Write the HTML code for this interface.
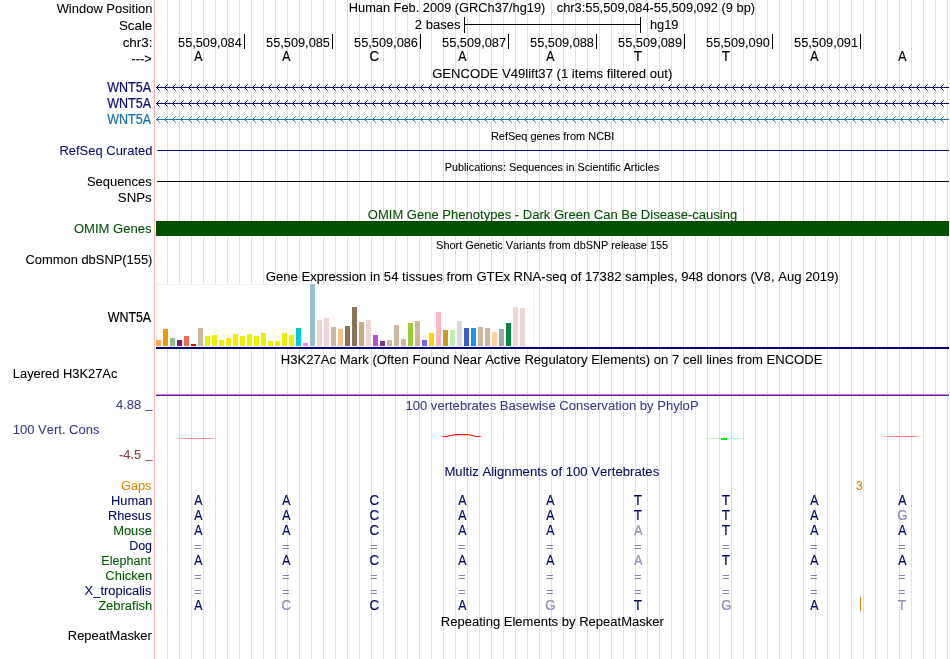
<!DOCTYPE html>
<html lang="en"><head><meta charset="utf-8"><title>UCSC Genome Browser chr3:55,509,084-55,509,092</title>
<style>html,body{margin:0;padding:0;background:#fff;}svg{display:block;will-change:transform;}text{font-family:"Liberation Sans", Arial, Helvetica, sans-serif;font-size:13.7px;font-kerning:none;white-space:pre;color:#000;fill:currentColor;stroke:currentColor;stroke-width:0.08px;}.s{font-size:11.4px;}.u{font-size:13.8px;}.c{font-size:13.8px;stroke-width:0.2px;}.ar{font-size:11.6px;}.m{text-anchor:middle;}.eq{font-size:12px;color:#8282B4;stroke:none;}.nv{color:#0C0C78;}.lb{color:#1870B0;}.gr{color:#005000;}.bl{color:#3C3C8C;}.rd{color:#8C3C3C;}.or{color:#E68400;}.sp1{color:#000A64;}.sp2{color:#005A00;}.mm{color:#8C8CB8;}</style></head><body>
<svg width="950" height="659" viewBox="0 0 950 659">
<rect width="950" height="659" fill="#fff"/>
<path d="M167 0V659M179 0V659M191 0V659M203 0V659M215 0V659M227 0V659M239 0V659M251 0V659M263 0V659M275 0V659M287 0V659M299 0V659M311 0V659M323 0V659M335 0V659M347 0V659M359 0V659M371 0V659M383 0V659M395 0V659M407 0V659M419 0V659M431 0V659M443 0V659M455 0V659M467 0V659M479 0V659M491 0V659M503 0V659M515 0V659M527 0V659M539 0V659M551 0V659M563 0V659M575 0V659M587 0V659M599 0V659M611 0V659M623 0V659M635 0V659M647 0V659M659 0V659M671 0V659M683 0V659M695 0V659M707 0V659M719 0V659M731 0V659M743 0V659M755 0V659M767 0V659M779 0V659M791 0V659M803 0V659M815 0V659M827 0V659M839 0V659M851 0V659M863 0V659M875 0V659M887 0V659M899 0V659M911 0V659M923 0V659M935 0V659M947 0V659" stroke="#DCDCFF" stroke-width="1" fill="none" transform="translate(0.5,0)" shape-rendering="crispEdges"/>
<rect x="154" y="0" width="1" height="659" fill="#FFB4B4"/>
<text x="56.64" y="13" textLength="95.90" lengthAdjust="spacingAndGlyphs">Window Position</text>
<text x="118.89" y="30" textLength="33.40" lengthAdjust="spacingAndGlyphs">Scale</text>
<text x="122.63" y="47" textLength="29.90" lengthAdjust="spacingAndGlyphs">chr3:</text>
<text x="131.54" y="63" textLength="20.08" lengthAdjust="spacingAndGlyphs">---&gt;</text>
<text x="348.75" y="12" textLength="196.55" lengthAdjust="spacingAndGlyphs">Human Feb. 2009 (GRCh37/hg19)</text>
<text x="556.81" y="12" textLength="198.29" lengthAdjust="spacingAndGlyphs">chr3:55,509,084-55,509,092 (9 bp)</text>
<text x="414.84" y="29" textLength="45.63" lengthAdjust="spacingAndGlyphs">2 bases</text>
<text x="649.91" y="29" textLength="28.60" lengthAdjust="spacingAndGlyphs">hg19</text>
<path d="M464.5 17V33M640.5 17V33M464 24.5H641" stroke="#000" stroke-width="1" fill="none" shape-rendering="crispEdges"/>
<text x="178.09" y="47" textLength="63.68" lengthAdjust="spacingAndGlyphs">55,509,084</text>
<rect x="244" y="34" width="1" height="15" fill="#000"/>
<text x="266.09" y="47" textLength="63.85" lengthAdjust="spacingAndGlyphs">55,509,085</text>
<rect x="332" y="34" width="1" height="15" fill="#000"/>
<text x="354.09" y="47" textLength="63.87" lengthAdjust="spacingAndGlyphs">55,509,086</text>
<rect x="420" y="34" width="1" height="15" fill="#000"/>
<text x="442.09" y="47" textLength="63.95" lengthAdjust="spacingAndGlyphs">55,509,087</text>
<rect x="508" y="34" width="1" height="15" fill="#000"/>
<text x="530.09" y="47" textLength="63.87" lengthAdjust="spacingAndGlyphs">55,509,088</text>
<rect x="596" y="34" width="1" height="15" fill="#000"/>
<text x="618.09" y="47" textLength="63.92" lengthAdjust="spacingAndGlyphs">55,509,089</text>
<rect x="684" y="34" width="1" height="15" fill="#000"/>
<text x="706.09" y="47" textLength="63.81" lengthAdjust="spacingAndGlyphs">55,509,090</text>
<rect x="772" y="34" width="1" height="15" fill="#000"/>
<text x="794.09" y="47" textLength="63.94" lengthAdjust="spacingAndGlyphs">55,509,091</text>
<rect x="860" y="34" width="1" height="15" fill="#000"/>
<text x="194.20" y="61" textLength="8.19" lengthAdjust="spacingAndGlyphs" class="c">A</text>
<text x="282.20" y="61" textLength="8.19" lengthAdjust="spacingAndGlyphs" class="c">A</text>
<text x="369.43" y="61" textLength="9.57" lengthAdjust="spacingAndGlyphs" class="c">C</text>
<text x="458.20" y="61" textLength="8.19" lengthAdjust="spacingAndGlyphs" class="c">A</text>
<text x="546.20" y="61" textLength="8.19" lengthAdjust="spacingAndGlyphs" class="c">A</text>
<text x="633.87" y="61" textLength="8.26" lengthAdjust="spacingAndGlyphs" class="c">T</text>
<text x="721.87" y="61" textLength="8.26" lengthAdjust="spacingAndGlyphs" class="c">T</text>
<text x="810.20" y="61" textLength="8.19" lengthAdjust="spacingAndGlyphs" class="c">A</text>
<text x="898.20" y="61" textLength="8.19" lengthAdjust="spacingAndGlyphs" class="c">A</text>
<text x="432.14" y="78" textLength="240.17" lengthAdjust="spacingAndGlyphs">GENCODE V49lift37 (1 items filtered out)</text>
<text x="107.25" y="92" textLength="43.78" lengthAdjust="spacingAndGlyphs" class="nv c">WNT5A</text>
<rect x="156" y="87" width="793" height="1" fill="#0C0C78"/>
<path d="M156.5 87.5l2.8 -2.8M156.5 87.5l2.8 2.8M164.5 87.5l2.8 -2.8M164.5 87.5l2.8 2.8M172.5 87.5l2.8 -2.8M172.5 87.5l2.8 2.8M180.5 87.5l2.8 -2.8M180.5 87.5l2.8 2.8M188.5 87.5l2.8 -2.8M188.5 87.5l2.8 2.8M196.5 87.5l2.8 -2.8M196.5 87.5l2.8 2.8M204.5 87.5l2.8 -2.8M204.5 87.5l2.8 2.8M212.5 87.5l2.8 -2.8M212.5 87.5l2.8 2.8M220.5 87.5l2.8 -2.8M220.5 87.5l2.8 2.8M228.5 87.5l2.8 -2.8M228.5 87.5l2.8 2.8M236.5 87.5l2.8 -2.8M236.5 87.5l2.8 2.8M244.5 87.5l2.8 -2.8M244.5 87.5l2.8 2.8M252.5 87.5l2.8 -2.8M252.5 87.5l2.8 2.8M260.5 87.5l2.8 -2.8M260.5 87.5l2.8 2.8M268.5 87.5l2.8 -2.8M268.5 87.5l2.8 2.8M276.5 87.5l2.8 -2.8M276.5 87.5l2.8 2.8M284.5 87.5l2.8 -2.8M284.5 87.5l2.8 2.8M292.5 87.5l2.8 -2.8M292.5 87.5l2.8 2.8M300.5 87.5l2.8 -2.8M300.5 87.5l2.8 2.8M308.5 87.5l2.8 -2.8M308.5 87.5l2.8 2.8M316.5 87.5l2.8 -2.8M316.5 87.5l2.8 2.8M324.5 87.5l2.8 -2.8M324.5 87.5l2.8 2.8M332.5 87.5l2.8 -2.8M332.5 87.5l2.8 2.8M340.5 87.5l2.8 -2.8M340.5 87.5l2.8 2.8M348.5 87.5l2.8 -2.8M348.5 87.5l2.8 2.8M356.5 87.5l2.8 -2.8M356.5 87.5l2.8 2.8M364.5 87.5l2.8 -2.8M364.5 87.5l2.8 2.8M372.5 87.5l2.8 -2.8M372.5 87.5l2.8 2.8M380.5 87.5l2.8 -2.8M380.5 87.5l2.8 2.8M388.5 87.5l2.8 -2.8M388.5 87.5l2.8 2.8M396.5 87.5l2.8 -2.8M396.5 87.5l2.8 2.8M404.5 87.5l2.8 -2.8M404.5 87.5l2.8 2.8M412.5 87.5l2.8 -2.8M412.5 87.5l2.8 2.8M420.5 87.5l2.8 -2.8M420.5 87.5l2.8 2.8M428.5 87.5l2.8 -2.8M428.5 87.5l2.8 2.8M436.5 87.5l2.8 -2.8M436.5 87.5l2.8 2.8M444.5 87.5l2.8 -2.8M444.5 87.5l2.8 2.8M452.5 87.5l2.8 -2.8M452.5 87.5l2.8 2.8M460.5 87.5l2.8 -2.8M460.5 87.5l2.8 2.8M468.5 87.5l2.8 -2.8M468.5 87.5l2.8 2.8M476.5 87.5l2.8 -2.8M476.5 87.5l2.8 2.8M484.5 87.5l2.8 -2.8M484.5 87.5l2.8 2.8M492.5 87.5l2.8 -2.8M492.5 87.5l2.8 2.8M500.5 87.5l2.8 -2.8M500.5 87.5l2.8 2.8M508.5 87.5l2.8 -2.8M508.5 87.5l2.8 2.8M516.5 87.5l2.8 -2.8M516.5 87.5l2.8 2.8M524.5 87.5l2.8 -2.8M524.5 87.5l2.8 2.8M532.5 87.5l2.8 -2.8M532.5 87.5l2.8 2.8M540.5 87.5l2.8 -2.8M540.5 87.5l2.8 2.8M548.5 87.5l2.8 -2.8M548.5 87.5l2.8 2.8M556.5 87.5l2.8 -2.8M556.5 87.5l2.8 2.8M564.5 87.5l2.8 -2.8M564.5 87.5l2.8 2.8M572.5 87.5l2.8 -2.8M572.5 87.5l2.8 2.8M580.5 87.5l2.8 -2.8M580.5 87.5l2.8 2.8M588.5 87.5l2.8 -2.8M588.5 87.5l2.8 2.8M596.5 87.5l2.8 -2.8M596.5 87.5l2.8 2.8M604.5 87.5l2.8 -2.8M604.5 87.5l2.8 2.8M612.5 87.5l2.8 -2.8M612.5 87.5l2.8 2.8M620.5 87.5l2.8 -2.8M620.5 87.5l2.8 2.8M628.5 87.5l2.8 -2.8M628.5 87.5l2.8 2.8M636.5 87.5l2.8 -2.8M636.5 87.5l2.8 2.8M644.5 87.5l2.8 -2.8M644.5 87.5l2.8 2.8M652.5 87.5l2.8 -2.8M652.5 87.5l2.8 2.8M660.5 87.5l2.8 -2.8M660.5 87.5l2.8 2.8M668.5 87.5l2.8 -2.8M668.5 87.5l2.8 2.8M676.5 87.5l2.8 -2.8M676.5 87.5l2.8 2.8M684.5 87.5l2.8 -2.8M684.5 87.5l2.8 2.8M692.5 87.5l2.8 -2.8M692.5 87.5l2.8 2.8M700.5 87.5l2.8 -2.8M700.5 87.5l2.8 2.8M708.5 87.5l2.8 -2.8M708.5 87.5l2.8 2.8M716.5 87.5l2.8 -2.8M716.5 87.5l2.8 2.8M724.5 87.5l2.8 -2.8M724.5 87.5l2.8 2.8M732.5 87.5l2.8 -2.8M732.5 87.5l2.8 2.8M740.5 87.5l2.8 -2.8M740.5 87.5l2.8 2.8M748.5 87.5l2.8 -2.8M748.5 87.5l2.8 2.8M756.5 87.5l2.8 -2.8M756.5 87.5l2.8 2.8M764.5 87.5l2.8 -2.8M764.5 87.5l2.8 2.8M772.5 87.5l2.8 -2.8M772.5 87.5l2.8 2.8M780.5 87.5l2.8 -2.8M780.5 87.5l2.8 2.8M788.5 87.5l2.8 -2.8M788.5 87.5l2.8 2.8M796.5 87.5l2.8 -2.8M796.5 87.5l2.8 2.8M804.5 87.5l2.8 -2.8M804.5 87.5l2.8 2.8M812.5 87.5l2.8 -2.8M812.5 87.5l2.8 2.8M820.5 87.5l2.8 -2.8M820.5 87.5l2.8 2.8M828.5 87.5l2.8 -2.8M828.5 87.5l2.8 2.8M836.5 87.5l2.8 -2.8M836.5 87.5l2.8 2.8M844.5 87.5l2.8 -2.8M844.5 87.5l2.8 2.8M852.5 87.5l2.8 -2.8M852.5 87.5l2.8 2.8M860.5 87.5l2.8 -2.8M860.5 87.5l2.8 2.8M868.5 87.5l2.8 -2.8M868.5 87.5l2.8 2.8M876.5 87.5l2.8 -2.8M876.5 87.5l2.8 2.8M884.5 87.5l2.8 -2.8M884.5 87.5l2.8 2.8M892.5 87.5l2.8 -2.8M892.5 87.5l2.8 2.8M900.5 87.5l2.8 -2.8M900.5 87.5l2.8 2.8M908.5 87.5l2.8 -2.8M908.5 87.5l2.8 2.8M916.5 87.5l2.8 -2.8M916.5 87.5l2.8 2.8M924.5 87.5l2.8 -2.8M924.5 87.5l2.8 2.8M932.5 87.5l2.8 -2.8M932.5 87.5l2.8 2.8M940.5 87.5l2.8 -2.8M940.5 87.5l2.8 2.8" stroke="#0C0C78" stroke-width="1" fill="none" stroke-linecap="square"/>
<text x="107.25" y="108" textLength="43.78" lengthAdjust="spacingAndGlyphs" class="nv c">WNT5A</text>
<rect x="156" y="103" width="793" height="1" fill="#0C0C78"/>
<path d="M156.5 103.5l2.8 -2.8M156.5 103.5l2.8 2.8M164.5 103.5l2.8 -2.8M164.5 103.5l2.8 2.8M172.5 103.5l2.8 -2.8M172.5 103.5l2.8 2.8M180.5 103.5l2.8 -2.8M180.5 103.5l2.8 2.8M188.5 103.5l2.8 -2.8M188.5 103.5l2.8 2.8M196.5 103.5l2.8 -2.8M196.5 103.5l2.8 2.8M204.5 103.5l2.8 -2.8M204.5 103.5l2.8 2.8M212.5 103.5l2.8 -2.8M212.5 103.5l2.8 2.8M220.5 103.5l2.8 -2.8M220.5 103.5l2.8 2.8M228.5 103.5l2.8 -2.8M228.5 103.5l2.8 2.8M236.5 103.5l2.8 -2.8M236.5 103.5l2.8 2.8M244.5 103.5l2.8 -2.8M244.5 103.5l2.8 2.8M252.5 103.5l2.8 -2.8M252.5 103.5l2.8 2.8M260.5 103.5l2.8 -2.8M260.5 103.5l2.8 2.8M268.5 103.5l2.8 -2.8M268.5 103.5l2.8 2.8M276.5 103.5l2.8 -2.8M276.5 103.5l2.8 2.8M284.5 103.5l2.8 -2.8M284.5 103.5l2.8 2.8M292.5 103.5l2.8 -2.8M292.5 103.5l2.8 2.8M300.5 103.5l2.8 -2.8M300.5 103.5l2.8 2.8M308.5 103.5l2.8 -2.8M308.5 103.5l2.8 2.8M316.5 103.5l2.8 -2.8M316.5 103.5l2.8 2.8M324.5 103.5l2.8 -2.8M324.5 103.5l2.8 2.8M332.5 103.5l2.8 -2.8M332.5 103.5l2.8 2.8M340.5 103.5l2.8 -2.8M340.5 103.5l2.8 2.8M348.5 103.5l2.8 -2.8M348.5 103.5l2.8 2.8M356.5 103.5l2.8 -2.8M356.5 103.5l2.8 2.8M364.5 103.5l2.8 -2.8M364.5 103.5l2.8 2.8M372.5 103.5l2.8 -2.8M372.5 103.5l2.8 2.8M380.5 103.5l2.8 -2.8M380.5 103.5l2.8 2.8M388.5 103.5l2.8 -2.8M388.5 103.5l2.8 2.8M396.5 103.5l2.8 -2.8M396.5 103.5l2.8 2.8M404.5 103.5l2.8 -2.8M404.5 103.5l2.8 2.8M412.5 103.5l2.8 -2.8M412.5 103.5l2.8 2.8M420.5 103.5l2.8 -2.8M420.5 103.5l2.8 2.8M428.5 103.5l2.8 -2.8M428.5 103.5l2.8 2.8M436.5 103.5l2.8 -2.8M436.5 103.5l2.8 2.8M444.5 103.5l2.8 -2.8M444.5 103.5l2.8 2.8M452.5 103.5l2.8 -2.8M452.5 103.5l2.8 2.8M460.5 103.5l2.8 -2.8M460.5 103.5l2.8 2.8M468.5 103.5l2.8 -2.8M468.5 103.5l2.8 2.8M476.5 103.5l2.8 -2.8M476.5 103.5l2.8 2.8M484.5 103.5l2.8 -2.8M484.5 103.5l2.8 2.8M492.5 103.5l2.8 -2.8M492.5 103.5l2.8 2.8M500.5 103.5l2.8 -2.8M500.5 103.5l2.8 2.8M508.5 103.5l2.8 -2.8M508.5 103.5l2.8 2.8M516.5 103.5l2.8 -2.8M516.5 103.5l2.8 2.8M524.5 103.5l2.8 -2.8M524.5 103.5l2.8 2.8M532.5 103.5l2.8 -2.8M532.5 103.5l2.8 2.8M540.5 103.5l2.8 -2.8M540.5 103.5l2.8 2.8M548.5 103.5l2.8 -2.8M548.5 103.5l2.8 2.8M556.5 103.5l2.8 -2.8M556.5 103.5l2.8 2.8M564.5 103.5l2.8 -2.8M564.5 103.5l2.8 2.8M572.5 103.5l2.8 -2.8M572.5 103.5l2.8 2.8M580.5 103.5l2.8 -2.8M580.5 103.5l2.8 2.8M588.5 103.5l2.8 -2.8M588.5 103.5l2.8 2.8M596.5 103.5l2.8 -2.8M596.5 103.5l2.8 2.8M604.5 103.5l2.8 -2.8M604.5 103.5l2.8 2.8M612.5 103.5l2.8 -2.8M612.5 103.5l2.8 2.8M620.5 103.5l2.8 -2.8M620.5 103.5l2.8 2.8M628.5 103.5l2.8 -2.8M628.5 103.5l2.8 2.8M636.5 103.5l2.8 -2.8M636.5 103.5l2.8 2.8M644.5 103.5l2.8 -2.8M644.5 103.5l2.8 2.8M652.5 103.5l2.8 -2.8M652.5 103.5l2.8 2.8M660.5 103.5l2.8 -2.8M660.5 103.5l2.8 2.8M668.5 103.5l2.8 -2.8M668.5 103.5l2.8 2.8M676.5 103.5l2.8 -2.8M676.5 103.5l2.8 2.8M684.5 103.5l2.8 -2.8M684.5 103.5l2.8 2.8M692.5 103.5l2.8 -2.8M692.5 103.5l2.8 2.8M700.5 103.5l2.8 -2.8M700.5 103.5l2.8 2.8M708.5 103.5l2.8 -2.8M708.5 103.5l2.8 2.8M716.5 103.5l2.8 -2.8M716.5 103.5l2.8 2.8M724.5 103.5l2.8 -2.8M724.5 103.5l2.8 2.8M732.5 103.5l2.8 -2.8M732.5 103.5l2.8 2.8M740.5 103.5l2.8 -2.8M740.5 103.5l2.8 2.8M748.5 103.5l2.8 -2.8M748.5 103.5l2.8 2.8M756.5 103.5l2.8 -2.8M756.5 103.5l2.8 2.8M764.5 103.5l2.8 -2.8M764.5 103.5l2.8 2.8M772.5 103.5l2.8 -2.8M772.5 103.5l2.8 2.8M780.5 103.5l2.8 -2.8M780.5 103.5l2.8 2.8M788.5 103.5l2.8 -2.8M788.5 103.5l2.8 2.8M796.5 103.5l2.8 -2.8M796.5 103.5l2.8 2.8M804.5 103.5l2.8 -2.8M804.5 103.5l2.8 2.8M812.5 103.5l2.8 -2.8M812.5 103.5l2.8 2.8M820.5 103.5l2.8 -2.8M820.5 103.5l2.8 2.8M828.5 103.5l2.8 -2.8M828.5 103.5l2.8 2.8M836.5 103.5l2.8 -2.8M836.5 103.5l2.8 2.8M844.5 103.5l2.8 -2.8M844.5 103.5l2.8 2.8M852.5 103.5l2.8 -2.8M852.5 103.5l2.8 2.8M860.5 103.5l2.8 -2.8M860.5 103.5l2.8 2.8M868.5 103.5l2.8 -2.8M868.5 103.5l2.8 2.8M876.5 103.5l2.8 -2.8M876.5 103.5l2.8 2.8M884.5 103.5l2.8 -2.8M884.5 103.5l2.8 2.8M892.5 103.5l2.8 -2.8M892.5 103.5l2.8 2.8M900.5 103.5l2.8 -2.8M900.5 103.5l2.8 2.8M908.5 103.5l2.8 -2.8M908.5 103.5l2.8 2.8M916.5 103.5l2.8 -2.8M916.5 103.5l2.8 2.8M924.5 103.5l2.8 -2.8M924.5 103.5l2.8 2.8M932.5 103.5l2.8 -2.8M932.5 103.5l2.8 2.8M940.5 103.5l2.8 -2.8M940.5 103.5l2.8 2.8" stroke="#0C0C78" stroke-width="1" fill="none" stroke-linecap="square"/>
<text x="107.25" y="124" textLength="43.78" lengthAdjust="spacingAndGlyphs" class="lb c">WNT5A</text>
<rect x="156" y="119" width="793" height="1" fill="#1870B0"/>
<path d="M156.5 119.5l2.8 -2.8M156.5 119.5l2.8 2.8M164.5 119.5l2.8 -2.8M164.5 119.5l2.8 2.8M172.5 119.5l2.8 -2.8M172.5 119.5l2.8 2.8M180.5 119.5l2.8 -2.8M180.5 119.5l2.8 2.8M188.5 119.5l2.8 -2.8M188.5 119.5l2.8 2.8M196.5 119.5l2.8 -2.8M196.5 119.5l2.8 2.8M204.5 119.5l2.8 -2.8M204.5 119.5l2.8 2.8M212.5 119.5l2.8 -2.8M212.5 119.5l2.8 2.8M220.5 119.5l2.8 -2.8M220.5 119.5l2.8 2.8M228.5 119.5l2.8 -2.8M228.5 119.5l2.8 2.8M236.5 119.5l2.8 -2.8M236.5 119.5l2.8 2.8M244.5 119.5l2.8 -2.8M244.5 119.5l2.8 2.8M252.5 119.5l2.8 -2.8M252.5 119.5l2.8 2.8M260.5 119.5l2.8 -2.8M260.5 119.5l2.8 2.8M268.5 119.5l2.8 -2.8M268.5 119.5l2.8 2.8M276.5 119.5l2.8 -2.8M276.5 119.5l2.8 2.8M284.5 119.5l2.8 -2.8M284.5 119.5l2.8 2.8M292.5 119.5l2.8 -2.8M292.5 119.5l2.8 2.8M300.5 119.5l2.8 -2.8M300.5 119.5l2.8 2.8M308.5 119.5l2.8 -2.8M308.5 119.5l2.8 2.8M316.5 119.5l2.8 -2.8M316.5 119.5l2.8 2.8M324.5 119.5l2.8 -2.8M324.5 119.5l2.8 2.8M332.5 119.5l2.8 -2.8M332.5 119.5l2.8 2.8M340.5 119.5l2.8 -2.8M340.5 119.5l2.8 2.8M348.5 119.5l2.8 -2.8M348.5 119.5l2.8 2.8M356.5 119.5l2.8 -2.8M356.5 119.5l2.8 2.8M364.5 119.5l2.8 -2.8M364.5 119.5l2.8 2.8M372.5 119.5l2.8 -2.8M372.5 119.5l2.8 2.8M380.5 119.5l2.8 -2.8M380.5 119.5l2.8 2.8M388.5 119.5l2.8 -2.8M388.5 119.5l2.8 2.8M396.5 119.5l2.8 -2.8M396.5 119.5l2.8 2.8M404.5 119.5l2.8 -2.8M404.5 119.5l2.8 2.8M412.5 119.5l2.8 -2.8M412.5 119.5l2.8 2.8M420.5 119.5l2.8 -2.8M420.5 119.5l2.8 2.8M428.5 119.5l2.8 -2.8M428.5 119.5l2.8 2.8M436.5 119.5l2.8 -2.8M436.5 119.5l2.8 2.8M444.5 119.5l2.8 -2.8M444.5 119.5l2.8 2.8M452.5 119.5l2.8 -2.8M452.5 119.5l2.8 2.8M460.5 119.5l2.8 -2.8M460.5 119.5l2.8 2.8M468.5 119.5l2.8 -2.8M468.5 119.5l2.8 2.8M476.5 119.5l2.8 -2.8M476.5 119.5l2.8 2.8M484.5 119.5l2.8 -2.8M484.5 119.5l2.8 2.8M492.5 119.5l2.8 -2.8M492.5 119.5l2.8 2.8M500.5 119.5l2.8 -2.8M500.5 119.5l2.8 2.8M508.5 119.5l2.8 -2.8M508.5 119.5l2.8 2.8M516.5 119.5l2.8 -2.8M516.5 119.5l2.8 2.8M524.5 119.5l2.8 -2.8M524.5 119.5l2.8 2.8M532.5 119.5l2.8 -2.8M532.5 119.5l2.8 2.8M540.5 119.5l2.8 -2.8M540.5 119.5l2.8 2.8M548.5 119.5l2.8 -2.8M548.5 119.5l2.8 2.8M556.5 119.5l2.8 -2.8M556.5 119.5l2.8 2.8M564.5 119.5l2.8 -2.8M564.5 119.5l2.8 2.8M572.5 119.5l2.8 -2.8M572.5 119.5l2.8 2.8M580.5 119.5l2.8 -2.8M580.5 119.5l2.8 2.8M588.5 119.5l2.8 -2.8M588.5 119.5l2.8 2.8M596.5 119.5l2.8 -2.8M596.5 119.5l2.8 2.8M604.5 119.5l2.8 -2.8M604.5 119.5l2.8 2.8M612.5 119.5l2.8 -2.8M612.5 119.5l2.8 2.8M620.5 119.5l2.8 -2.8M620.5 119.5l2.8 2.8M628.5 119.5l2.8 -2.8M628.5 119.5l2.8 2.8M636.5 119.5l2.8 -2.8M636.5 119.5l2.8 2.8M644.5 119.5l2.8 -2.8M644.5 119.5l2.8 2.8M652.5 119.5l2.8 -2.8M652.5 119.5l2.8 2.8M660.5 119.5l2.8 -2.8M660.5 119.5l2.8 2.8M668.5 119.5l2.8 -2.8M668.5 119.5l2.8 2.8M676.5 119.5l2.8 -2.8M676.5 119.5l2.8 2.8M684.5 119.5l2.8 -2.8M684.5 119.5l2.8 2.8M692.5 119.5l2.8 -2.8M692.5 119.5l2.8 2.8M700.5 119.5l2.8 -2.8M700.5 119.5l2.8 2.8M708.5 119.5l2.8 -2.8M708.5 119.5l2.8 2.8M716.5 119.5l2.8 -2.8M716.5 119.5l2.8 2.8M724.5 119.5l2.8 -2.8M724.5 119.5l2.8 2.8M732.5 119.5l2.8 -2.8M732.5 119.5l2.8 2.8M740.5 119.5l2.8 -2.8M740.5 119.5l2.8 2.8M748.5 119.5l2.8 -2.8M748.5 119.5l2.8 2.8M756.5 119.5l2.8 -2.8M756.5 119.5l2.8 2.8M764.5 119.5l2.8 -2.8M764.5 119.5l2.8 2.8M772.5 119.5l2.8 -2.8M772.5 119.5l2.8 2.8M780.5 119.5l2.8 -2.8M780.5 119.5l2.8 2.8M788.5 119.5l2.8 -2.8M788.5 119.5l2.8 2.8M796.5 119.5l2.8 -2.8M796.5 119.5l2.8 2.8M804.5 119.5l2.8 -2.8M804.5 119.5l2.8 2.8M812.5 119.5l2.8 -2.8M812.5 119.5l2.8 2.8M820.5 119.5l2.8 -2.8M820.5 119.5l2.8 2.8M828.5 119.5l2.8 -2.8M828.5 119.5l2.8 2.8M836.5 119.5l2.8 -2.8M836.5 119.5l2.8 2.8M844.5 119.5l2.8 -2.8M844.5 119.5l2.8 2.8M852.5 119.5l2.8 -2.8M852.5 119.5l2.8 2.8M860.5 119.5l2.8 -2.8M860.5 119.5l2.8 2.8M868.5 119.5l2.8 -2.8M868.5 119.5l2.8 2.8M876.5 119.5l2.8 -2.8M876.5 119.5l2.8 2.8M884.5 119.5l2.8 -2.8M884.5 119.5l2.8 2.8M892.5 119.5l2.8 -2.8M892.5 119.5l2.8 2.8M900.5 119.5l2.8 -2.8M900.5 119.5l2.8 2.8M908.5 119.5l2.8 -2.8M908.5 119.5l2.8 2.8M916.5 119.5l2.8 -2.8M916.5 119.5l2.8 2.8M924.5 119.5l2.8 -2.8M924.5 119.5l2.8 2.8M932.5 119.5l2.8 -2.8M932.5 119.5l2.8 2.8M940.5 119.5l2.8 -2.8M940.5 119.5l2.8 2.8" stroke="#1870B0" stroke-width="1" fill="none" stroke-linecap="square"/>
<text x="490.90" y="140" textLength="123.51" lengthAdjust="spacingAndGlyphs" class="s">RefSeq genes from NCBI</text>
<text x="59.44" y="155" textLength="93.00" lengthAdjust="spacingAndGlyphs" class="nv">RefSeq Curated</text>
<rect x="157" y="150" width="792" height="1" fill="#0C0C78"/>
<text x="444.71" y="171" textLength="214.38" lengthAdjust="spacingAndGlyphs" class="s">Publications: Sequences in Scientific Articles</text>
<text x="86.91" y="186" textLength="64.76" lengthAdjust="spacingAndGlyphs">Sequences</text>
<rect x="157" y="181" width="792" height="1" fill="#000"/>
<text x="117.80" y="202" textLength="33.88" lengthAdjust="spacingAndGlyphs">SNPs</text>
<text x="367.78" y="219" textLength="369.46" lengthAdjust="spacingAndGlyphs" class="gr">OMIM Gene Phenotypes - Dark Green Can Be Disease-causing</text>
<text x="73.88" y="233" textLength="77.79" lengthAdjust="spacingAndGlyphs" class="gr">OMIM Genes</text>
<rect x="156" y="221" width="793" height="15" fill="#005000"/>
<text x="436.11" y="249" textLength="232.05" lengthAdjust="spacingAndGlyphs" class="s">Short Genetic Variants from dbSNP release 155</text>
<text x="25.55" y="264" textLength="126.85" lengthAdjust="spacingAndGlyphs">Common dbSNP(155)</text>
<text x="265.79" y="281" textLength="572.92" lengthAdjust="spacingAndGlyphs">Gene Expression in 54 tissues from GTEx RNA-seq of 17382 samples, 948 donors (V8, Aug 2019)</text>
<text x="107.75" y="322" textLength="43.38" lengthAdjust="spacingAndGlyphs" class="c">WNT5A</text>
<rect x="156.5" y="284.5" width="377" height="62" fill="#fff" stroke="#F0F0F0" stroke-width="1"/>
<rect x="156" y="340" width="5" height="6" fill="#FFA54F"/>
<rect x="163" y="329" width="5" height="17" fill="#EE9A00"/>
<rect x="170" y="338" width="5" height="8" fill="#8FBC8F"/>
<rect x="177" y="340" width="5" height="6" fill="#8B1C62"/>
<rect x="184" y="336" width="5" height="10" fill="#EE6A50"/>
<rect x="191" y="344" width="5" height="2" fill="#FF0000"/>
<rect x="198" y="328" width="5" height="18" fill="#CDB79E"/>
<rect x="205" y="336" width="5" height="10" fill="#EEEE00"/>
<rect x="212" y="335" width="5" height="11" fill="#EEEE00"/>
<rect x="219" y="340" width="5" height="6" fill="#EEEE00"/>
<rect x="226" y="338" width="5" height="8" fill="#EEEE00"/>
<rect x="233" y="334" width="5" height="12" fill="#EEEE00"/>
<rect x="240" y="336" width="5" height="10" fill="#EEEE00"/>
<rect x="247" y="334" width="5" height="12" fill="#EEEE00"/>
<rect x="254" y="336" width="5" height="10" fill="#EEEE00"/>
<rect x="261" y="333" width="5" height="13" fill="#EEEE00"/>
<rect x="268" y="341" width="5" height="5" fill="#EEEE00"/>
<rect x="275" y="341" width="5" height="5" fill="#EEEE00"/>
<rect x="282" y="333" width="5" height="13" fill="#EEEE00"/>
<rect x="289" y="335" width="5" height="11" fill="#EEEE00"/>
<rect x="296" y="328" width="5" height="18" fill="#00CDCD"/>
<rect x="303" y="343" width="5" height="3" fill="#EE82EE"/>
<rect x="310" y="284" width="5" height="62" fill="#9AC0CD"/>
<rect x="317" y="320" width="5" height="26" fill="#EED5D2"/>
<rect x="324" y="318" width="5" height="28" fill="#EED5D2"/>
<rect x="331" y="327" width="5" height="19" fill="#CDB79E"/>
<rect x="338" y="329" width="5" height="17" fill="#EEC591"/>
<rect x="345" y="326" width="5" height="20" fill="#8B7355"/>
<rect x="352" y="307" width="5" height="39" fill="#8B7355"/>
<rect x="359" y="322" width="5" height="24" fill="#CDAA7D"/>
<rect x="366" y="320" width="5" height="26" fill="#EED5D2"/>
<rect x="373" y="335" width="5" height="11" fill="#B452CD"/>
<rect x="380" y="341" width="5" height="5" fill="#7A378B"/>
<rect x="387" y="340" width="5" height="6" fill="#CDB79E"/>
<rect x="394" y="325" width="5" height="21" fill="#CDB79E"/>
<rect x="401" y="339" width="5" height="7" fill="#CDB79E"/>
<rect x="408" y="323" width="5" height="23" fill="#9ACD32"/>
<rect x="415" y="321" width="5" height="25" fill="#CDB79E"/>
<rect x="422" y="340" width="5" height="6" fill="#7A67EE"/>
<rect x="429" y="333" width="5" height="13" fill="#FFD700"/>
<rect x="436" y="312" width="5" height="34" fill="#FFB6C1"/>
<rect x="443" y="330" width="5" height="16" fill="#CD9B1D"/>
<rect x="450" y="330" width="5" height="16" fill="#B4EEB4"/>
<rect x="457" y="321" width="5" height="25" fill="#D9D9D9"/>
<rect x="464" y="328" width="5" height="18" fill="#3A5FCD"/>
<rect x="471" y="328" width="5" height="18" fill="#1E90FF"/>
<rect x="478" y="327" width="5" height="19" fill="#CDB79E"/>
<rect x="485" y="328" width="5" height="18" fill="#CDB79E"/>
<rect x="492" y="332" width="5" height="14" fill="#FFD39B"/>
<rect x="499" y="329" width="5" height="17" fill="#A6A6A6"/>
<rect x="506" y="323" width="5" height="23" fill="#008B45"/>
<rect x="513" y="307" width="5" height="39" fill="#EED5D2"/>
<rect x="520" y="308" width="5" height="38" fill="#EED5D2"/>
<rect x="156" y="347" width="793" height="2" fill="#000080"/>
<text x="280.83" y="364" textLength="541.64" lengthAdjust="spacingAndGlyphs">H3K27Ac Mark (Often Found Near Active Regulatory Elements) on 7 cell lines from ENCODE</text>
<text x="12.84" y="378" textLength="104.50" lengthAdjust="spacingAndGlyphs">Layered H3K27Ac</text>
<rect x="156" y="394" width="793" height="1" fill="#FF69C8"/>
<rect x="156" y="395" width="793" height="1" fill="#3232A0"/>
<text x="405.46" y="410" textLength="293.13" lengthAdjust="spacingAndGlyphs" class="bl">100 vertebrates Basewise Conservation by PhyloP</text>
<text x="115.90" y="409" textLength="25.26" lengthAdjust="spacingAndGlyphs" class="bl">4.88</text>
<text x="145.39" y="408" textLength="6.87" lengthAdjust="spacingAndGlyphs" class="bl">_</text>
<text x="12.81" y="434" textLength="86.66" lengthAdjust="spacingAndGlyphs" class="bl">100 Vert. Cons</text>
<text x="119.03" y="459" textLength="22.11" lengthAdjust="spacingAndGlyphs" class="rd">-4.5</text>
<text x="145.39" y="458" textLength="6.87" lengthAdjust="spacingAndGlyphs" class="rd">_</text>
<defs><linearGradient id="fr" x1="0" x2="1" y1="0" y2="0"><stop offset="0" stop-color="#FF0000" stop-opacity="0.08"/><stop offset="0.18" stop-color="#FF0000" stop-opacity="0.38"/><stop offset="0.38" stop-color="#FF0000" stop-opacity="0.55"/><stop offset="0.5" stop-color="#FF0000" stop-opacity="0.25"/><stop offset="0.65" stop-color="#FF0000" stop-opacity="0.6"/><stop offset="0.85" stop-color="#FF0000" stop-opacity="0.35"/><stop offset="1" stop-color="#FF0000" stop-opacity="0.08"/></linearGradient><linearGradient id="fg" x1="0" x2="1" y1="0" y2="0"><stop offset="0" stop-color="#00EE00" stop-opacity="0.1"/><stop offset="0.2" stop-color="#00EE00" stop-opacity="0.3"/><stop offset="0.8" stop-color="#00EE00" stop-opacity="0.3"/><stop offset="1" stop-color="#00EE00" stop-opacity="0.1"/></linearGradient><linearGradient id="fa" gradientUnits="userSpaceOnUse" x1="441" x2="482" y1="0" y2="0"><stop offset="0" stop-color="#FF0000" stop-opacity="0.35"/><stop offset="0.1" stop-color="#FF0000" stop-opacity="1"/><stop offset="0.9" stop-color="#FF0000" stop-opacity="1"/><stop offset="1" stop-color="#FF0000" stop-opacity="0.35"/></linearGradient></defs>
<rect x="177" y="438" width="40" height="1" fill="url(#fr)"/>
<path d="M441.5 436.6L447 436.5C450 436.1 453 434.7 456.5 434.5L461.5 434.8L466.5 434.5C470 434.7 473 436.1 476 436.5L481.5 436.6" stroke="url(#fa)" stroke-width="1.05" fill="none"/>
<rect x="705" y="438" width="38" height="1" fill="url(#fg)"/>
<rect x="721" y="438" width="6" height="2" fill="#00EE00"/>
<rect x="882" y="436" width="40" height="1" fill="url(#fr)"/><rect x="886" y="436" width="30" height="1" fill="#FF0000" opacity="0.12"/>
<text x="444.42" y="476" textLength="214.85" lengthAdjust="spacingAndGlyphs" class="sp1">Multiz Alignments of 100 Vertebrates</text>
<text x="120.96" y="490" textLength="30.55" lengthAdjust="spacingAndGlyphs" class="or">Gaps</text>
<text x="859.5" y="490" class="m or" style="font-size:12.3px">3</text>
<rect x="860" y="597" width="1" height="14" fill="#E68400"/>
<text x="111.05" y="505" textLength="41.44" lengthAdjust="spacingAndGlyphs" class="sp1">Human</text>
<text x="194.20" y="505" textLength="8.19" lengthAdjust="spacingAndGlyphs" class="sp1 c">A</text>
<text x="282.20" y="505" textLength="8.19" lengthAdjust="spacingAndGlyphs" class="sp1 c">A</text>
<text x="369.43" y="505" textLength="9.57" lengthAdjust="spacingAndGlyphs" class="sp1 c">C</text>
<text x="458.20" y="505" textLength="8.19" lengthAdjust="spacingAndGlyphs" class="sp1 c">A</text>
<text x="546.20" y="505" textLength="8.19" lengthAdjust="spacingAndGlyphs" class="sp1 c">A</text>
<text x="633.87" y="505" textLength="8.26" lengthAdjust="spacingAndGlyphs" class="sp1 c">T</text>
<text x="721.87" y="505" textLength="8.26" lengthAdjust="spacingAndGlyphs" class="sp1 c">T</text>
<text x="810.20" y="505" textLength="8.19" lengthAdjust="spacingAndGlyphs" class="sp1 c">A</text>
<text x="898.20" y="505" textLength="8.19" lengthAdjust="spacingAndGlyphs" class="sp1 c">A</text>
<text x="108.05" y="520" textLength="43.31" lengthAdjust="spacingAndGlyphs" class="sp1">Rhesus</text>
<text x="194.20" y="520" textLength="8.19" lengthAdjust="spacingAndGlyphs" class="sp1 c">A</text>
<text x="282.20" y="520" textLength="8.19" lengthAdjust="spacingAndGlyphs" class="sp1 c">A</text>
<text x="369.43" y="520" textLength="9.57" lengthAdjust="spacingAndGlyphs" class="sp1 c">C</text>
<text x="458.20" y="520" textLength="8.19" lengthAdjust="spacingAndGlyphs" class="sp1 c">A</text>
<text x="546.20" y="520" textLength="8.19" lengthAdjust="spacingAndGlyphs" class="sp1 c">A</text>
<text x="633.87" y="520" textLength="8.26" lengthAdjust="spacingAndGlyphs" class="sp1 c">T</text>
<text x="721.87" y="520" textLength="8.26" lengthAdjust="spacingAndGlyphs" class="sp1 c">T</text>
<text x="810.20" y="520" textLength="8.19" lengthAdjust="spacingAndGlyphs" class="sp1 c">A</text>
<text x="897.31" y="520" textLength="10.30" lengthAdjust="spacingAndGlyphs" class="mm c">G</text>
<text x="113.14" y="535" textLength="38.89" lengthAdjust="spacingAndGlyphs" class="sp2">Mouse</text>
<text x="194.20" y="535" textLength="8.19" lengthAdjust="spacingAndGlyphs" class="sp1 c">A</text>
<text x="282.20" y="535" textLength="8.19" lengthAdjust="spacingAndGlyphs" class="sp1 c">A</text>
<text x="369.43" y="535" textLength="9.57" lengthAdjust="spacingAndGlyphs" class="sp1 c">C</text>
<text x="458.20" y="535" textLength="8.19" lengthAdjust="spacingAndGlyphs" class="sp1 c">A</text>
<text x="546.20" y="535" textLength="8.19" lengthAdjust="spacingAndGlyphs" class="sp1 c">A</text>
<text x="634.20" y="535" textLength="8.19" lengthAdjust="spacingAndGlyphs" class="mm c">A</text>
<text x="721.87" y="535" textLength="8.26" lengthAdjust="spacingAndGlyphs" class="sp1 c">T</text>
<text x="810.20" y="535" textLength="8.19" lengthAdjust="spacingAndGlyphs" class="sp1 c">A</text>
<text x="898.20" y="535" textLength="8.19" lengthAdjust="spacingAndGlyphs" class="sp1 c">A</text>
<text x="129.18" y="550" textLength="22.88" lengthAdjust="spacingAndGlyphs" class="sp1">Dog</text>
<text x="194.07" y="550.95" class="eq" textLength="7.57" lengthAdjust="spacingAndGlyphs">=</text>
<text x="282.07" y="550.95" class="eq" textLength="7.57" lengthAdjust="spacingAndGlyphs">=</text>
<text x="370.07" y="550.95" class="eq" textLength="7.57" lengthAdjust="spacingAndGlyphs">=</text>
<text x="458.07" y="550.95" class="eq" textLength="7.57" lengthAdjust="spacingAndGlyphs">=</text>
<text x="546.07" y="550.95" class="eq" textLength="7.57" lengthAdjust="spacingAndGlyphs">=</text>
<text x="634.07" y="550.95" class="eq" textLength="7.57" lengthAdjust="spacingAndGlyphs">=</text>
<text x="722.07" y="550.95" class="eq" textLength="7.57" lengthAdjust="spacingAndGlyphs">=</text>
<text x="810.07" y="550.95" class="eq" textLength="7.57" lengthAdjust="spacingAndGlyphs">=</text>
<text x="898.07" y="550.95" class="eq" textLength="7.57" lengthAdjust="spacingAndGlyphs">=</text>
<text x="101.37" y="565" textLength="49.62" lengthAdjust="spacingAndGlyphs" class="sp2">Elephant</text>
<text x="194.20" y="565" textLength="8.19" lengthAdjust="spacingAndGlyphs" class="sp1 c">A</text>
<text x="282.20" y="565" textLength="8.19" lengthAdjust="spacingAndGlyphs" class="sp1 c">A</text>
<text x="369.43" y="565" textLength="9.57" lengthAdjust="spacingAndGlyphs" class="sp1 c">C</text>
<text x="458.20" y="565" textLength="8.19" lengthAdjust="spacingAndGlyphs" class="sp1 c">A</text>
<text x="546.20" y="565" textLength="8.19" lengthAdjust="spacingAndGlyphs" class="sp1 c">A</text>
<text x="634.20" y="565" textLength="8.19" lengthAdjust="spacingAndGlyphs" class="mm c">A</text>
<text x="721.87" y="565" textLength="8.26" lengthAdjust="spacingAndGlyphs" class="sp1 c">T</text>
<text x="810.20" y="565" textLength="8.19" lengthAdjust="spacingAndGlyphs" class="sp1 c">A</text>
<text x="898.20" y="565" textLength="8.19" lengthAdjust="spacingAndGlyphs" class="sp1 c">A</text>
<text x="105.34" y="580" textLength="46.95" lengthAdjust="spacingAndGlyphs" class="sp2">Chicken</text>
<text x="194.07" y="580.95" class="eq" textLength="7.57" lengthAdjust="spacingAndGlyphs">=</text>
<text x="282.07" y="580.95" class="eq" textLength="7.57" lengthAdjust="spacingAndGlyphs">=</text>
<text x="370.07" y="580.95" class="eq" textLength="7.57" lengthAdjust="spacingAndGlyphs">=</text>
<text x="458.07" y="580.95" class="eq" textLength="7.57" lengthAdjust="spacingAndGlyphs">=</text>
<text x="546.07" y="580.95" class="eq" textLength="7.57" lengthAdjust="spacingAndGlyphs">=</text>
<text x="634.07" y="580.95" class="eq" textLength="7.57" lengthAdjust="spacingAndGlyphs">=</text>
<text x="722.07" y="580.95" class="eq" textLength="7.57" lengthAdjust="spacingAndGlyphs">=</text>
<text x="810.07" y="580.95" class="eq" textLength="7.57" lengthAdjust="spacingAndGlyphs">=</text>
<text x="898.07" y="580.95" class="eq" textLength="7.57" lengthAdjust="spacingAndGlyphs">=</text>
<text x="84.61" y="595" textLength="66.76" lengthAdjust="spacingAndGlyphs" class="sp1">X_tropicalis</text>
<text x="194.07" y="595.95" class="eq" textLength="7.57" lengthAdjust="spacingAndGlyphs">=</text>
<text x="282.07" y="595.95" class="eq" textLength="7.57" lengthAdjust="spacingAndGlyphs">=</text>
<text x="370.07" y="595.95" class="eq" textLength="7.57" lengthAdjust="spacingAndGlyphs">=</text>
<text x="458.07" y="595.95" class="eq" textLength="7.57" lengthAdjust="spacingAndGlyphs">=</text>
<text x="546.07" y="595.95" class="eq" textLength="7.57" lengthAdjust="spacingAndGlyphs">=</text>
<text x="634.07" y="595.95" class="eq" textLength="7.57" lengthAdjust="spacingAndGlyphs">=</text>
<text x="722.07" y="595.95" class="eq" textLength="7.57" lengthAdjust="spacingAndGlyphs">=</text>
<text x="810.07" y="595.95" class="eq" textLength="7.57" lengthAdjust="spacingAndGlyphs">=</text>
<text x="898.07" y="595.95" class="eq" textLength="7.57" lengthAdjust="spacingAndGlyphs">=</text>
<text x="98.19" y="610" textLength="54.10" lengthAdjust="spacingAndGlyphs" class="sp2">Zebrafish</text>
<text x="194.20" y="610" textLength="8.19" lengthAdjust="spacingAndGlyphs" class="sp1 c">A</text>
<text x="281.43" y="610" textLength="9.57" lengthAdjust="spacingAndGlyphs" class="mm c">C</text>
<text x="369.43" y="610" textLength="9.57" lengthAdjust="spacingAndGlyphs" class="sp1 c">C</text>
<text x="458.20" y="610" textLength="8.19" lengthAdjust="spacingAndGlyphs" class="sp1 c">A</text>
<text x="545.31" y="610" textLength="10.30" lengthAdjust="spacingAndGlyphs" class="mm c">G</text>
<text x="633.87" y="610" textLength="8.26" lengthAdjust="spacingAndGlyphs" class="sp1 c">T</text>
<text x="721.31" y="610" textLength="10.30" lengthAdjust="spacingAndGlyphs" class="mm c">G</text>
<text x="810.20" y="610" textLength="8.19" lengthAdjust="spacingAndGlyphs" class="sp1 c">A</text>
<text x="897.87" y="610" textLength="8.26" lengthAdjust="spacingAndGlyphs" class="mm c">T</text>
<text x="440.73" y="626" textLength="223.19" lengthAdjust="spacingAndGlyphs">Repeating Elements by RepeatMasker</text>
<text x="67.84" y="640" textLength="83.97" lengthAdjust="spacingAndGlyphs">RepeatMasker</text>
</svg></body></html>
